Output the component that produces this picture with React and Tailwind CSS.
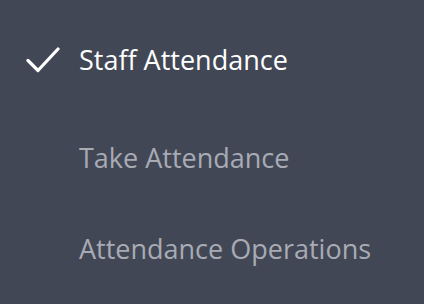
import React from 'react';

const CheckIcon = () => (
  <svg width="34" height="28" viewBox="0 0 34 28" fill="none" className="shrink-0">
    <path d="M2 14.5 12 24.5 32 3" stroke="#ffffff" strokeWidth="3.2" strokeLinecap="round" strokeLinejoin="round" />
  </svg>
);

const items = [
  { label: 'Staff Attendance', active: true },
  { label: 'Take Attendance', active: false },
  { label: 'Attendance Operations', active: false },
];

const App = () => {
  return (
    <div
      className="w-full h-[304px] bg-[#424756] overflow-hidden"
      style={{ fontFamily: '"Open Sans", "Noto Sans", sans-serif' }}
    >
      <div className="flex flex-col pt-[44px]">
        {/* Menu rows */}
        <div className="flex items-center h-[32px]">
          <div className="w-[79px] pl-[26px] flex items-center">
            <CheckIcon />
          </div>
          <span className="text-[27px] leading-[32px] font-medium text-white">{items[0].label}</span>
        </div>
        <div className="flex items-center h-[32px] mt-[66px]">
          <div className="w-[79px]" />
          <span className="text-[27px] leading-[32px] font-medium text-[#a8abb4]">{items[1].label}</span>
        </div>
        <div className="flex items-center h-[32px] mt-[59px]">
          <div className="w-[79px]" />
          <span className="text-[27px] leading-[32px] font-medium text-[#a8abb4]">{items[2].label}</span>
        </div>
      </div>
    </div>
  );
};

export default App;
